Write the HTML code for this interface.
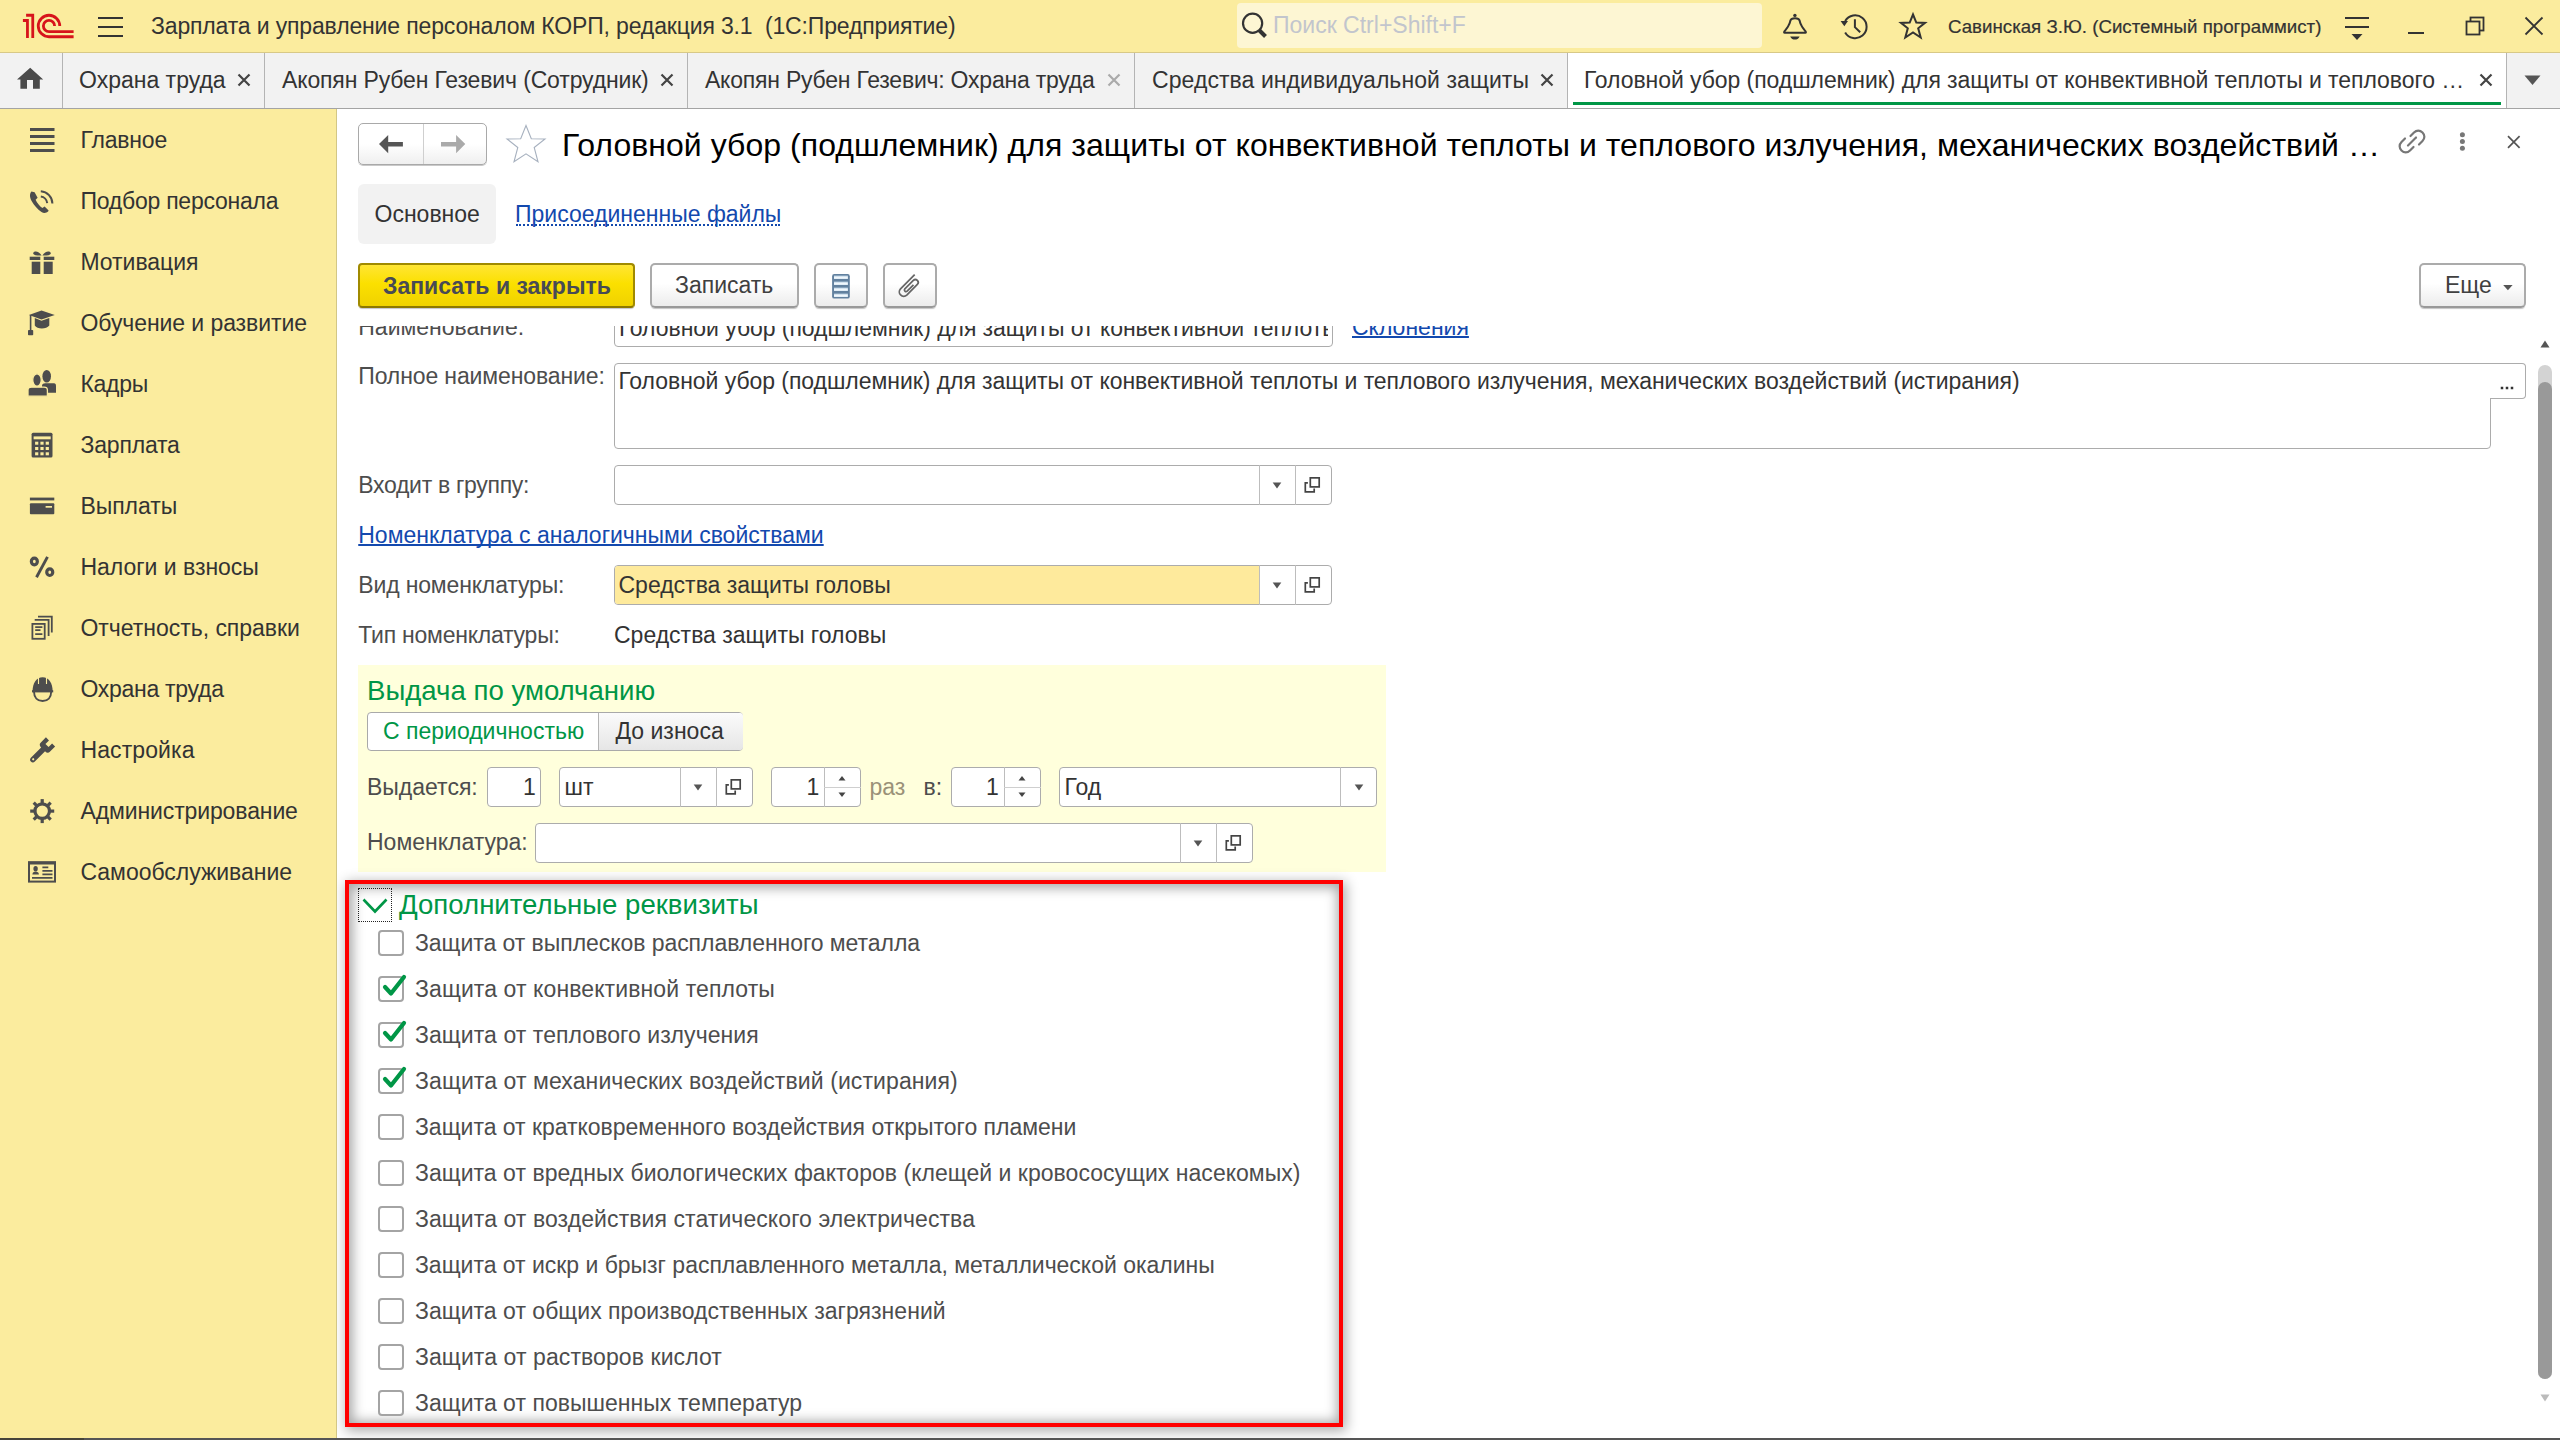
<!DOCTYPE html>
<html><head><meta charset="utf-8"><style>
html,body{margin:0;padding:0;width:2560px;height:1440px;overflow:hidden;background:#fff;font-family:"Liberation Sans",sans-serif;}
.a{position:absolute;}
.t{position:absolute;white-space:pre;font-family:"Liberation Sans",sans-serif;}
svg{position:absolute;overflow:visible}
</style></head><body>
<div class="a" style="left:0px;top:0px;width:2560px;height:52px;background:#fbec9e"></div>
<div class="a" style="left:0px;top:52px;width:2560px;height:1px;background:#d8c987"></div>
<div class="a" style="left:0px;top:53px;width:2560px;height:55px;background:#f2f2f2"></div>
<div class="a" style="left:0px;top:108px;width:2560px;height:1px;background:#a4a4a4"></div>
<div class="a" style="left:0px;top:109px;width:336px;height:1329px;background:#fbec9e"></div>
<div class="a" style="left:336px;top:109px;width:1px;height:1329px;background:#d3c785"></div>
<div class="a" style="left:337px;top:109px;width:2223px;height:1329px;background:#ffffff"></div>
<div class="a" style="left:0px;top:1438px;width:2560px;height:2px;background:#555555"></div>
<div class="a" style="left:0px;top:1438px;width:84px;height:2px;background:#46443a"></div>
<svg class="a" style="left:0px;top:0px" width="80" height="50" viewBox="0 0 80 50">
<g fill="none" stroke="#d7141b" stroke-width="2.8" stroke-linecap="butt" stroke-linejoin="miter">
<path d="M22.9 20.5 H27.45 V38"/>
<path d="M26.1 15.25 H32.75 V38"/>
<path d="M59.75 26 A10.75 10.75 0 1 0 49 36.75 H73.6"/>
<path d="M54.6 26 A5.6 5.6 0 1 0 49 31.6 H73.6"/>
</g>
</svg>
<div class="a" style="left:98px;top:17px;width:25px;height:2px;background:#333333"></div>
<div class="a" style="left:98px;top:26px;width:25px;height:2px;background:#333333"></div>
<div class="a" style="left:98px;top:35px;width:25px;height:2px;background:#333333"></div>
<div class="t" style="left:151px;top:11px;font-size:23px;line-height:30px;color:#333333;letter-spacing:-0.15px">Зарплата и управление персоналом КОРП, редакция 3.1&nbsp; (1С:Предприятие)</div>
<div class="a" style="left:1237px;top:3px;width:525px;height:45px;background:#fdf6d3;border-radius:4px"></div>
<svg class="a" style="left:1240px;top:10px" width="32" height="32" viewBox="0 0 32 32"><circle cx="12.6" cy="13.3" r="9.6" fill="none" stroke="#333" stroke-width="2.2"/><path d="M19 20 L25.5 26.5" stroke="#333" stroke-width="4" stroke-linecap="butt"/></svg>
<div class="t" style="left:1273px;top:10px;font-size:23px;line-height:30px;color:#c2c5cd;">Поиск Ctrl+Shift+F</div>
<svg class="a" style="left:1780px;top:10px" width="32" height="34" viewBox="0 0 32 34"><path d="M4.6 22.8 L25.4 22.8 C25.9 22.8 26.1 22.2 25.7 21.6 C24.6 19.8 22.6 17.8 21.5 15.6 C20 13 19.9 11.6 19.6 10.5 C19.2 9 17.8 8.2 15 8.2 C12.2 8.2 10.8 9 10.4 10.5 C10.1 11.6 10 13 8.5 15.6 C7.4 17.8 5.4 19.8 4.3 21.6 C3.9 22.2 4.1 22.8 4.6 22.8 Z" fill="none" stroke="#333" stroke-width="2" stroke-linejoin="round"/>
<circle cx="14.9" cy="5.4" r="1.7" fill="#333"/><path d="M10.2 26.4 L19.6 26.4 C18.5 28.7 16.8 29.6 14.9 29.6 C13 29.6 11.3 28.7 10.2 26.4 Z" fill="#333"/></svg>
<svg class="a" style="left:1838px;top:10px" width="34" height="34" viewBox="0 0 34 34"><path d="M7.14 11.0 A11.5 11.5 0 1 1 7.14 22.5" fill="none" stroke="#333" stroke-width="2"/>
<path d="M2.6 11.1 L10 11.1 L6.3 16.2 Z" fill="#333"/><path d="M16.9 9.3 L16.9 17.1 L22.2 22.2" fill="none" stroke="#333" stroke-width="2"/></svg>
<svg class="a" style="left:1896px;top:10px" width="34" height="34" viewBox="0 0 34 34"><path d="M17 4.5 L20.3 12.6 L29 12.9 L22.2 18.3 L24.7 27.5 L17 22.5 L9.3 27.5 L11.8 18.3 L5 12.9 L13.7 12.6 Z" fill="none" stroke="#333" stroke-width="2" stroke-linejoin="miter"/></svg>
<div class="t" style="left:1948px;top:12px;font-size:18.7px;line-height:30px;color:#333333;-webkit-text-stroke:0.2px #333">Савинская З.Ю. (Системный программист)</div>
<div class="a" style="left:2345px;top:17px;width:24px;height:2px;background:#333333"></div>
<div class="a" style="left:2345px;top:26px;width:24px;height:2px;background:#333333"></div>
<svg class="a" style="left:2350px;top:33px" width="14" height="8" viewBox="0 0 14 8"><path d="M1.5 1 L12.5 1 L7 7 Z" fill="#333"/></svg>
<div class="a" style="left:2408px;top:32px;width:16px;height:2px;background:#333333"></div>
<svg class="a" style="left:2464px;top:15px" width="22" height="22" viewBox="0 0 22 22"><rect x="6.5" y="2.5" width="13" height="13" fill="none" stroke="#333" stroke-width="1.8"/><rect x="2.5" y="6.5" width="13" height="13" fill="#fbec9e" stroke="#333" stroke-width="1.8"/></svg>
<svg class="a" style="left:2523px;top:15px" width="22" height="22" viewBox="0 0 22 22"><path d="M2.5 2.5 L19.5 19.5 M19.5 2.5 L2.5 19.5" stroke="#333" stroke-width="1.8"/></svg>
<svg class="a" style="left:15px;top:66px" width="30" height="26" viewBox="0 0 30 26"><path d="M15.2 1.8 L28.2 13.6 L24.8 13.6 L24.8 22.7 L18 22.7 L18 14 L12 14 L12 22.7 L5.4 22.7 L5.4 13.6 L2 13.6 Z" fill="#4b4b4b"/></svg>
<div class="a" style="left:62px;top:53px;width:1px;height:55px;background:#b4b4b4"></div>
<div class="a" style="left:264px;top:53px;width:1px;height:55px;background:#b4b4b4"></div>
<div class="a" style="left:687px;top:53px;width:1px;height:55px;background:#b4b4b4"></div>
<div class="a" style="left:1134px;top:53px;width:1px;height:55px;background:#b4b4b4"></div>
<div class="a" style="left:1567px;top:53px;width:1px;height:55px;background:#b4b4b4"></div>
<div class="a" style="left:2506px;top:53px;width:1px;height:55px;background:#b4b4b4"></div>
<div class="a" style="left:1568px;top:53px;width:938px;height:55px;background:#ffffff"></div>
<div class="a" style="left:1573px;top:102px;width:928px;height:3px;background:#009646"></div>
<div class="t" style="left:79px;top:65px;font-size:23px;line-height:30px;color:#333333;">Охрана труда</div>
<svg class="a" style="left:236.5px;top:73px" width="14" height="14" viewBox="0 0 14 14"><path d="M1.5 1.5 L12.5 12.5 M12.5 1.5 L1.5 12.5" stroke="#444" stroke-width="2.2"/></svg>
<div class="t" style="left:282px;top:65px;font-size:23px;line-height:30px;color:#333333;letter-spacing:-0.14px">Акопян Рубен Гезевич (Сотрудник)</div>
<svg class="a" style="left:660px;top:73px" width="14" height="14" viewBox="0 0 14 14"><path d="M1.5 1.5 L12.5 12.5 M12.5 1.5 L1.5 12.5" stroke="#444" stroke-width="2.2"/></svg>
<div class="t" style="left:705px;top:65px;font-size:23px;line-height:30px;color:#333333;letter-spacing:-0.22px">Акопян Рубен Гезевич: Охрана труда</div>
<svg class="a" style="left:1106.5px;top:73px" width="14" height="14" viewBox="0 0 14 14"><path d="M1.5 1.5 L12.5 12.5 M12.5 1.5 L1.5 12.5" stroke="#aaa" stroke-width="2.2"/></svg>
<div class="t" style="left:1152px;top:65px;font-size:23px;line-height:30px;color:#333333;letter-spacing:0.07px">Средства индивидуальной защиты</div>
<svg class="a" style="left:1539.5px;top:73px" width="14" height="14" viewBox="0 0 14 14"><path d="M1.5 1.5 L12.5 12.5 M12.5 1.5 L1.5 12.5" stroke="#444" stroke-width="2.2"/></svg>
<div class="t" style="left:1584px;top:65px;font-size:23px;line-height:30px;color:#333333;letter-spacing:-0.066px">Головной убор (подшлемник) для защиты от конвективной теплоты и теплового …</div>
<svg class="a" style="left:2478.5px;top:73px" width="14" height="14" viewBox="0 0 14 14"><path d="M1.5 1.5 L12.5 12.5 M12.5 1.5 L1.5 12.5" stroke="#444" stroke-width="2.2"/></svg>
<svg class="a" style="left:2524px;top:75px" width="18" height="11" viewBox="0 0 18 11"><path d="M0.5 0.5 L16.5 0.5 L8.5 10 Z" fill="#555"/></svg>
<div class="t" style="left:80.5px;top:124.5px;font-size:23px;line-height:30px;color:#333333;letter-spacing:-0.2px">Главное</div>
<div class="t" style="left:80.5px;top:185.5px;font-size:23px;line-height:30px;color:#333333;letter-spacing:-0.25px">Подбор персонала</div>
<div class="t" style="left:80.5px;top:246.5px;font-size:23px;line-height:30px;color:#333333;letter-spacing:-0.05px">Мотивация</div>
<div class="t" style="left:80.5px;top:307.5px;font-size:23px;line-height:30px;color:#333333;letter-spacing:-0.08px">Обучение и развитие</div>
<div class="t" style="left:80.5px;top:368.5px;font-size:23px;line-height:30px;color:#333333;letter-spacing:-0.3px">Кадры</div>
<div class="t" style="left:80.5px;top:429.5px;font-size:23px;line-height:30px;color:#333333;letter-spacing:-0.19px">Зарплата</div>
<div class="t" style="left:80.5px;top:490.5px;font-size:23px;line-height:30px;color:#333333;letter-spacing:-0.07px">Выплаты</div>
<div class="t" style="left:80.5px;top:551.5px;font-size:23px;line-height:30px;color:#333333;letter-spacing:-0.03px">Налоги и взносы</div>
<div class="t" style="left:80.5px;top:612.5px;font-size:23px;line-height:30px;color:#333333;letter-spacing:-0.03px">Отчетность, справки</div>
<div class="t" style="left:80.5px;top:673.5px;font-size:23px;line-height:30px;color:#333333;letter-spacing:-0.29px">Охрана труда</div>
<div class="t" style="left:80.5px;top:734.5px;font-size:23px;line-height:30px;color:#333333;letter-spacing:0.1px">Настройка</div>
<div class="t" style="left:80.5px;top:795.5px;font-size:23px;line-height:30px;color:#333333;letter-spacing:-0.12px">Администрирование</div>
<div class="t" style="left:80.5px;top:856.5px;font-size:23px;line-height:30px;color:#333333;letter-spacing:-0.03px">Самообслуживание</div>
<svg class="a" style="left:26px;top:125px" width="32" height="30" viewBox="0 0 32 30"><rect x="4" y="3" width="24.5" height="3" fill="#4d4d4d"/><rect x="4" y="10" width="24.5" height="3" fill="#4d4d4d"/><rect x="4" y="17" width="24.5" height="3" fill="#4d4d4d"/><rect x="4" y="24" width="24.5" height="3" fill="#4d4d4d"/></svg>
<svg class="a" style="left:26px;top:186px" width="32" height="30" viewBox="0 0 32 30"><path d="M5.5 5.5 C3.6 7.5 3.4 11 5.6 15 C8 19.5 12 23.8 15.5 26 C18 27.6 20.5 27 22.3 25.2 L22.6 24.6 L18.6 20.6 L16.4 22 C13.8 20.4 10.8 16.6 9.6 13.8 L11.6 11.8 L8.6 6.2 Z" fill="#4d4d4d"/>
<path d="M14.8 10.6 A7.4 7.4 0 0 1 21.2 17.2" fill="none" stroke="#4d4d4d" stroke-width="2"/><path d="M14.8 5.2 A12.6 12.6 0 0 1 26.4 17.6" fill="none" stroke="#4d4d4d" stroke-width="2"/></svg>
<svg class="a" style="left:26px;top:247px" width="32" height="30" viewBox="0 0 32 30"><rect x="3.7" y="9.7" width="10.6" height="3.3" fill="#4d4d4d"/><rect x="17.7" y="9.7" width="10.6" height="3.3" fill="#4d4d4d"/><rect x="5.7" y="14.7" width="8.6" height="12.3" fill="#4d4d4d"/><rect x="17.7" y="14.7" width="9" height="12.3" fill="#4d4d4d"/>
<path d="M15.6 8.6 C13 4 8.5 3.5 7.3 5.8 C6.6 7.4 8.6 8.8 15.6 8.6 Z M16.4 8.6 C19 4 23.5 3.5 24.7 5.8 C25.4 7.4 23.4 8.8 16.4 8.6 Z" fill="#4d4d4d"/></svg>
<svg class="a" style="left:26px;top:308px" width="32" height="30" viewBox="0 0 32 30"><path d="M2.9 7 L15.5 2.6 L28.8 7 L15.5 11.5 Z" fill="#4d4d4d"/><path d="M8.8 10 L8.8 17.5 C11 21.5 20.5 21.5 23.3 17.5 L23.3 10 L15.5 12.8 Z" fill="#4d4d4d"/>
<path d="M4.6 7 L4.6 23" stroke="#4d4d4d" stroke-width="1.6"/><rect x="2" y="22" width="5.2" height="5.2" rx="0.8" fill="#4d4d4d"/></svg>
<svg class="a" style="left:26px;top:369px" width="32" height="30" viewBox="0 0 32 30"><ellipse cx="20.7" cy="7.25" rx="4.3" ry="6.3" fill="#4d4d4d"/><path d="M16 23.7 L16 17 C16 15 17 14.2 19.5 14.2 L28 14.2 C29.3 14.2 30 15 30 17 L30 23.7 Z" fill="#4d4d4d"/>
<ellipse cx="11" cy="11" rx="4.25" ry="6.2" fill="#4d4d4d" stroke="#fbec9e" stroke-width="1.3"/><path d="M2 27.2 L2 21 C2 19 3.2 18.2 5.5 18.2 L18 18.2 C20.3 18.2 21.4 19 21.4 21 L21.4 27.2 Z" fill="#4d4d4d" stroke="#fbec9e" stroke-width="1.3"/></svg>
<svg class="a" style="left:26px;top:430px" width="32" height="30" viewBox="0 0 32 30"><rect x="5.6" y="2.8" width="20.9" height="24.8" rx="1.5" fill="#4d4d4d"/><rect x="7.6" y="6.4" width="17.1" height="2.9" fill="#fbec9e"/><rect x="9.1" y="11.7" width="3.2" height="3" fill="#fbec9e"/><rect x="14.399999999999999" y="11.7" width="3.2" height="3" fill="#fbec9e"/><rect x="19.7" y="11.7" width="3.2" height="3" fill="#fbec9e"/><rect x="9.1" y="17.0" width="3.2" height="3" fill="#fbec9e"/><rect x="14.399999999999999" y="17.0" width="3.2" height="3" fill="#fbec9e"/><rect x="19.7" y="17.0" width="3.2" height="3" fill="#fbec9e"/><rect x="9.1" y="22.299999999999997" width="3.2" height="3" fill="#fbec9e"/><rect x="14.399999999999999" y="22.299999999999997" width="3.2" height="3" fill="#fbec9e"/><rect x="19.7" y="22.299999999999997" width="3.2" height="3" fill="#fbec9e"/></svg>
<svg class="a" style="left:26px;top:491px" width="32" height="30" viewBox="0 0 32 30"><rect x="3.9" y="6.6" width="24.4" height="2.8" fill="#4d4d4d"/><rect x="3.9" y="12.2" width="24.4" height="11.1" rx="1" fill="#4d4d4d"/><rect x="19.6" y="15" width="6.4" height="1.7" fill="#fbec9e"/></svg>
<svg class="a" style="left:26px;top:552px" width="32" height="30" viewBox="0 0 32 30"><ellipse cx="8.35" cy="9.5" rx="3.0" ry="3.3" fill="none" stroke="#4d4d4d" stroke-width="3.2"/><ellipse cx="23.75" cy="20.2" rx="3.0" ry="3.3" fill="none" stroke="#4d4d4d" stroke-width="3.2"/>
<path d="M10.5 25.2 L21.5 4.9" stroke="#4d4d4d" stroke-width="2.9"/></svg>
<svg class="a" style="left:26px;top:613px" width="32" height="30" viewBox="0 0 32 30"><path d="M12 3.6 L25.8 3.6 L25.8 19.5" fill="none" stroke="#4d4d4d" stroke-width="1.8"/><path d="M8.7 6.8 L22.6 6.8 L22.6 23" fill="none" stroke="#4d4d4d" stroke-width="1.8"/>
<rect x="6.4" y="10.9" width="12.3" height="14.9" fill="none" stroke="#4d4d4d" stroke-width="1.8"/><path d="M9.2 14.2 L16.4 14.2 M9.2 17.2 L14.5 17.2 M9.2 21.2 L16.4 21.2" stroke="#4d4d4d" stroke-width="1.7"/></svg>
<svg class="a" style="left:26px;top:674px" width="32" height="30" viewBox="0 0 32 30"><path d="M6.5 18 C6.5 9 10.5 3.3 16.6 3.3 C22.7 3.3 26.7 9 26.7 18 Z" fill="#4d4d4d"/>
<path d="M12.5 3.8 L12.5 10 M20.5 3.8 L20.5 10" stroke="#fbec9e" stroke-width="1.1"/>
<path d="M8 17.5 C8 23.5 11.5 27 16.6 27 C21.7 27 25.2 23.5 25.2 17.5" fill="none" stroke="#4d4d4d" stroke-width="1.9"/><rect x="6" y="16.2" width="21.2" height="2.2" fill="#4d4d4d"/></svg>
<svg class="a" style="left:26px;top:735px" width="32" height="30" viewBox="0 0 32 30"><g transform="translate(21 10.5) rotate(45)"><path d="M-6.5 -5 L-2.2 -5 L-2.2 0 L2.2 0 L2.2 -5 L6.5 -5 L6.5 2.5 C6.5 4.5 5 5.5 3 5.5 L2.8 5.5 L2.8 20 C2.8 21.6 1.6 22.8 0 22.8 C-1.6 22.8 -2.8 21.6 -2.8 20 L-2.8 5.5 L-3 5.5 C-5 5.5 -6.5 4.5 -6.5 2.5 Z" fill="#4d4d4d"/><circle cx="0" cy="19.5" r="1.1" fill="#fbec9e"/></g></svg>
<svg class="a" style="left:26px;top:796px" width="32" height="30" viewBox="0 0 32 30"><rect x="14.6" y="3.1" width="3.2" height="6" fill="#4d4d4d" transform="rotate(0 16.2 15.1)"/><rect x="14.6" y="3.1" width="3.2" height="6" fill="#4d4d4d" transform="rotate(45 16.2 15.1)"/><rect x="14.6" y="3.1" width="3.2" height="6" fill="#4d4d4d" transform="rotate(90 16.2 15.1)"/><rect x="14.6" y="3.1" width="3.2" height="6" fill="#4d4d4d" transform="rotate(135 16.2 15.1)"/><rect x="14.6" y="3.1" width="3.2" height="6" fill="#4d4d4d" transform="rotate(180 16.2 15.1)"/><rect x="14.6" y="3.1" width="3.2" height="6" fill="#4d4d4d" transform="rotate(225 16.2 15.1)"/><rect x="14.6" y="3.1" width="3.2" height="6" fill="#4d4d4d" transform="rotate(270 16.2 15.1)"/><rect x="14.6" y="3.1" width="3.2" height="6" fill="#4d4d4d" transform="rotate(315 16.2 15.1)"/><circle cx="16.2" cy="15.1" r="7.3" fill="none" stroke="#4d4d4d" stroke-width="3.2"/></svg>
<svg class="a" style="left:26px;top:857px" width="32" height="30" viewBox="0 0 32 30"><rect x="3" y="5.4" width="26" height="19.2" fill="none" stroke="#4d4d4d" stroke-width="2"/><rect x="2" y="4.4" width="28" height="3.1" fill="#4d4d4d"/>
<ellipse cx="9.6" cy="11.8" rx="2.2" ry="2.8" fill="#4d4d4d"/><path d="M6.4 17.6 C6.4 15.5 7.6 14.8 9.6 14.8 C11.6 14.8 12.9 15.5 12.9 17.6 Z" fill="#4d4d4d"/>
<path d="M16.4 10.3 L22.3 10.3 M16.4 13.8 L26.5 13.8 M16.4 17.4 L26.5 17.4 M6 20.9 L26.5 20.9" stroke="#4d4d4d" stroke-width="1.8"/></svg>
<div class="a" style="left:358px;top:123px;width:129px;height:42px;box-sizing:border-box;border:1px solid #a9a9a9;border-radius:5px;background:linear-gradient(#ffffff 50%,#efefef);box-shadow:0 1px 0 #c9c9c9"></div>
<div class="a" style="left:423px;top:124px;width:1px;height:40px;background:#cfcfcf"></div>
<svg class="a" style="left:378px;top:134px" width="26" height="20" viewBox="0 0 26 20"><path d="M1 10.1 L10.2 1 L10.2 7.9 L24.9 7.9 L24.9 12.6 L10.2 12.6 L10.2 19.2 Z" fill="#555"/></svg>
<svg class="a" style="left:440px;top:134px" width="26" height="20" viewBox="0 0 26 20"><path d="M25.3 10.1 L16.1 1 L16.1 7.9 L1 7.9 L1 12.6 L16.1 12.6 L16.1 19.2 Z" fill="#aaa"/></svg>
<svg class="a" style="left:504px;top:124px" width="44" height="42" viewBox="0 0 44 42"><path d="M22 1.5 L27.3 14.7 L41 15 L30.2 23.5 L34 37.8 L22 29.8 L10 37.8 L13.8 23.5 L3 15 L16.7 14.7 Z" fill="none" stroke="#a7b1bf" stroke-width="1.1"/></svg>
<div class="t" style="left:562px;top:125px;font-size:32px;line-height:40px;color:#000;letter-spacing:0.04px">Головной убор (подшлемник) для защиты от конвективной теплоты и теплового излучения, механических воздействий …</div>
<svg class="a" style="left:2397.4px;top:126.2px" width="32" height="30" viewBox="0 0 32 30"><g fill="none" stroke="#777" stroke-width="2.2" stroke-linecap="round"><path d="M13.5 10 L17 6.5 C19.5 4 23 4 25.5 6.5 C28 9 28 12.5 25.5 15 L22 18.5"/><path d="M16.5 21 L13 24.5 C10.5 27 7 27 4.5 24.5 C2 22 2 18.5 4.5 16 L8 12.5"/><path d="M11 19.5 L19 11.5"/></g></svg>
<svg class="a" style="left:2455px;top:130px" width="14" height="24" viewBox="0 0 14 24"><circle cx="7.4" cy="4.8" r="2.5" fill="#777"/><circle cx="7.4" cy="11.6" r="2.5" fill="#777"/><circle cx="7.4" cy="18.3" r="2.5" fill="#777"/></svg>
<svg class="a" style="left:2505px;top:133px" width="18" height="18" viewBox="0 0 18 18"><path d="M3 3.2 L14.6 14.8 M14.6 3.2 L3 14.8" stroke="#555" stroke-width="1.7"/></svg>
<div class="a" style="left:358px;top:184px;width:138px;height:60px;background:#f2f2f2;border-radius:6px"></div>
<div class="t" style="left:374.5px;top:198.5px;font-size:23px;line-height:30px;color:#333333;">Основное</div>
<div class="t" style="left:515px;top:198.5px;font-size:23px;line-height:30px;color:#1349ae;">Присоединенные файлы</div>
<div class="a" style="left:516px;top:224px;width:264px;height:2px;border-bottom:2px dotted #1349ae;box-sizing:border-box;height:2px"></div>
<div class="a" style="left:358px;top:263px;width:277px;height:45px;box-sizing:border-box;border:2px solid #a08a00;border-bottom-color:#8c7800;border-radius:4px;background:linear-gradient(#ffe534,#fbe000 45%,#f0d200);box-shadow:0 2px 1px -1px #c4c4cc"></div>
<div class="t" style="left:383px;top:271px;font-size:23px;line-height:30px;color:#474a55;font-weight:bold">Записать и закрыть</div>
<div class="a" style="left:650px;top:263px;width:149px;height:45px;box-sizing:border-box;border:2px solid #ababab;border-bottom-color:#999;border-radius:5px;background:linear-gradient(#ffffff 45%,#ececec);box-shadow:0 2px 1px -1px #c4c4c4"></div>
<div class="t" style="left:675px;top:270px;font-size:23px;line-height:30px;color:#404040;">Записать</div>
<div class="a" style="left:814px;top:263px;width:54px;height:45px;box-sizing:border-box;border:2px solid #ababab;border-bottom-color:#999;border-radius:5px;background:linear-gradient(#ffffff 45%,#ececec);box-shadow:0 2px 1px -1px #c4c4c4"></div>
<div class="a" style="left:883px;top:263px;width:54px;height:45px;box-sizing:border-box;border:2px solid #ababab;border-bottom-color:#999;border-radius:5px;background:linear-gradient(#ffffff 45%,#ececec);box-shadow:0 2px 1px -1px #c4c4c4"></div>
<svg class="a" style="left:831px;top:273px" width="20" height="27" viewBox="0 0 20 27"><defs><linearGradient id="bg1" x1="0" y1="0" x2="0" y2="1"><stop offset="0" stop-color="#b9d0e3"/><stop offset="0.6" stop-color="#f4fafe"/><stop offset="1" stop-color="#d6e6f2"/></linearGradient></defs><rect x="1.1" y="1" width="17.7" height="24.6" rx="2.2" fill="#62819f"/><rect x="3" y="2.6" width="13.9" height="3.4" fill="url(#bg1)"/><rect x="3" y="8.6" width="13.9" height="3.4" fill="url(#bg1)"/><rect x="3" y="14.6" width="13.9" height="3.4" fill="url(#bg1)"/><rect x="3" y="20.6" width="13.9" height="3.4" fill="url(#bg1)"/></svg>
<svg class="a" style="left:897px;top:272px" width="26" height="28" viewBox="0 0 26 28"><path d="M17.67 2.7 L3.53 16.85 A4.4 4.4 0 0 0 9.75 23.07 L20.36 12.46 A2.85 2.85 0 0 0 16.33 8.43 L7.85 16.92 A1.6 1.6 0 0 0 10.11 19.18 L16.47 12.82" fill="none" stroke="#666" stroke-width="1.75" stroke-linejoin="round"/></svg>
<div class="a" style="left:2419px;top:263px;width:107px;height:45px;box-sizing:border-box;border:2px solid #ababab;border-bottom-color:#999;border-radius:5px;background:linear-gradient(#ffffff 45%,#ececec);box-shadow:0 2px 1px -1px #c4c4c4"></div>
<div class="t" style="left:2445px;top:270px;font-size:23px;line-height:30px;color:#404040;">Еще</div>
<svg class="a" style="left:2501px;top:282px" width="14" height="10" viewBox="0 0 14 10"><path d="M2.2 3 L11.6 3 L6.9 8.2 Z" fill="#555"/></svg>
<div class="a" style="left:337px;top:326px;width:2200px;height:1112px;overflow:hidden">
<div class="a" style="left:-337px;top:-326px;width:2560px;height:1440px">
<div class="t" style="left:358.25px;top:312px;font-size:23px;line-height:30px;color:#4d4d4d;">Наименование:</div>
<div class="a" style="left:614px;top:307px;width:719px;height:40px;box-sizing:border-box;border:1px solid #acacac;border-radius:4px;background:#fff"></div>
<div class="a" style="left:615px;top:308px;width:713px;height:38px;overflow:hidden"><div class="t" style="left:4px;top:5px;font-size:23px;line-height:30px;color:#333;letter-spacing:-0.05px">Головной убор (подшлемник) для защиты от конвективной теплоты и теплового излучения</div></div>
<div class="t" style="left:1352px;top:312px;font-size:23px;line-height:30px;color:#1349ae;text-decoration:underline;text-decoration-skip-ink:none;text-underline-offset:1px">Склонения</div>
<div class="t" style="left:358.25px;top:360.5px;font-size:23px;line-height:30px;color:#4d4d4d;letter-spacing:-0.12px">Полное наименование:</div>
<div class="a" style="left:614px;top:363px;width:1877px;height:86px;box-sizing:border-box;border:1px solid #acacac;border-radius:4px;background:#fff;border-radius:4px 0 4px 4px"></div>
<div class="t" style="left:618.5px;top:366px;font-size:23px;line-height:30px;color:#333;letter-spacing:-0.05px">Головной убор (подшлемник) для защиты от конвективной теплоты и теплового излучения, механических воздействий (истирания)</div>
<div class="a" style="left:2490px;top:363px;width:36px;height:36px;box-sizing:border-box;border:1px solid #acacac;border-radius:4px;background:#fff;border-left:none;border-radius:0 4px 4px 0"></div>
<svg class="a" style="left:2499px;top:385px" width="16" height="6" viewBox="0 0 16 6"><rect x="1.75" y="1.75" width="2.5" height="2.5" fill="#333"/><rect x="6.75" y="1.75" width="2.5" height="2.5" fill="#333"/><rect x="11.75" y="1.75" width="2.5" height="2.5" fill="#333"/></svg>
<div class="t" style="left:358.25px;top:470px;font-size:23px;line-height:30px;color:#4d4d4d;letter-spacing:-0.3px">Входит в группу:</div>
<div class="a" style="left:614px;top:465px;width:718px;height:40px;box-sizing:border-box;border:1px solid #acacac;border-radius:4px;background:#fff"></div>
<div class="a" style="left:1259px;top:465px;width:1px;height:40px;background:#bdbdbd"></div>
<svg class="a" style="left:1272.0px;top:481.5px" width="10" height="7" viewBox="0 0 10 7"><path d="M0.7 0.5 L9.3 0.5 L5 6.5 Z" fill="#555"/></svg>
<div class="a" style="left:1295px;top:465px;width:1px;height:40px;background:#bdbdbd"></div>
<svg class="a" style="left:1303.75px;top:476.0px" width="18" height="18" viewBox="0 0 18 18"><rect x="6.3" y="1.85" width="8.9" height="9.05" fill="none" stroke="#444" stroke-width="1.7"/><path d="M3.9 6.85 H1.3 V15.9 H10.2 V12.4" fill="none" stroke="#444" stroke-width="1.7"/></svg>
<div class="t" style="left:358.25px;top:520px;font-size:23px;line-height:30px;color:#1349ae;text-decoration:underline;text-decoration-skip-ink:none;text-underline-offset:1px">Номенклатура с аналогичными свойствами</div>
<div class="t" style="left:358.25px;top:569.5px;font-size:23px;line-height:30px;color:#4d4d4d;letter-spacing:-0.15px">Вид номенклатуры:</div>
<div class="a" style="left:614px;top:565px;width:718px;height:40px;box-sizing:border-box;border:1px solid #acacac;border-radius:4px;background:#fff"></div>
<div class="a" style="left:615px;top:566px;width:644px;height:38px;background:#feea9c;border-radius:3px 0 0 3px"></div>
<div class="a" style="left:1259px;top:565px;width:1px;height:40px;background:#bdbdbd"></div>
<svg class="a" style="left:1272.0px;top:581.5px" width="10" height="7" viewBox="0 0 10 7"><path d="M0.7 0.5 L9.3 0.5 L5 6.5 Z" fill="#555"/></svg>
<div class="a" style="left:1295px;top:565px;width:1px;height:40px;background:#bdbdbd"></div>
<svg class="a" style="left:1303.75px;top:576.0px" width="18" height="18" viewBox="0 0 18 18"><rect x="6.3" y="1.85" width="8.9" height="9.05" fill="none" stroke="#444" stroke-width="1.7"/><path d="M3.9 6.85 H1.3 V15.9 H10.2 V12.4" fill="none" stroke="#444" stroke-width="1.7"/></svg>
<div class="t" style="left:618.5px;top:569.5px;font-size:23px;line-height:30px;color:#333;">Средства защиты головы</div>
<div class="t" style="left:358.25px;top:620px;font-size:23px;line-height:30px;color:#4d4d4d;letter-spacing:-0.23px">Тип номенклатуры:</div>
<div class="t" style="left:614px;top:620px;font-size:23px;line-height:30px;color:#333;">Средства защиты головы</div>
<div class="a" style="left:358px;top:665px;width:1028px;height:207px;background:#ffffdc"></div>
<div class="t" style="left:367px;top:676px;font-size:27.6px;line-height:30px;color:#009646;">Выдача по умолчанию</div>
<div class="a" style="left:367px;top:712px;width:376px;height:39px;box-sizing:border-box;border:1px solid #a9a9a9;border-radius:4px;background:#fff;overflow:hidden"></div>
<div class="a" style="left:598px;top:713px;width:144px;height:37px;background:linear-gradient(#fbfbfb,#e6e6e6);border-left:1px solid #b4b4b4;border-radius:0 3px 3px 0"></div>
<div class="t" style="left:383px;top:716px;font-size:23px;line-height:30px;color:#009646;">С периодичностью</div>
<div class="t" style="left:615.5px;top:716px;font-size:23px;line-height:30px;color:#333333;">До износа</div>
<div class="t" style="left:367px;top:771.8px;font-size:23px;line-height:30px;color:#4d4d4d;">Выдается:</div>
<div class="a" style="left:487px;top:767px;width:54px;height:40px;box-sizing:border-box;border:1px solid #acacac;border-radius:4px;background:#fff"></div>
<div class="t" style="left:523px;top:771.8px;font-size:23px;line-height:30px;color:#333;">1</div>
<div class="a" style="left:559px;top:767px;width:194px;height:40px;box-sizing:border-box;border:1px solid #acacac;border-radius:4px;background:#fff"></div>
<div class="a" style="left:680px;top:767px;width:1px;height:40px;background:#bdbdbd"></div>
<svg class="a" style="left:693.0px;top:783.5px" width="10" height="7" viewBox="0 0 10 7"><path d="M0.7 0.5 L9.3 0.5 L5 6.5 Z" fill="#555"/></svg>
<div class="a" style="left:716px;top:767px;width:1px;height:40px;background:#bdbdbd"></div>
<svg class="a" style="left:724.75px;top:778.0px" width="18" height="18" viewBox="0 0 18 18"><rect x="6.3" y="1.85" width="8.9" height="9.05" fill="none" stroke="#444" stroke-width="1.7"/><path d="M3.9 6.85 H1.3 V15.9 H10.2 V12.4" fill="none" stroke="#444" stroke-width="1.7"/></svg>
<div class="t" style="left:564.5px;top:771.8px;font-size:23px;line-height:30px;color:#333;">шт</div>
<div class="a" style="left:771px;top:767px;width:90px;height:40px;box-sizing:border-box;border:1px solid #acacac;border-radius:4px;background:#fff"></div>
<div class="a" style="left:824px;top:767px;width:1px;height:40px;background:#bdbdbd"></div>
<div class="a" style="left:824px;top:786.5px;width:37px;height:1.0px;background:#cfcfcf"></div>
<svg class="a" style="left:837px;top:775px" width="10" height="7" viewBox="0 0 10 7"><path d="M5 1 L8.5 5.5 L1.5 5.5 Z" fill="#444"/></svg>
<svg class="a" style="left:837px;top:791px" width="10" height="7" viewBox="0 0 10 7"><path d="M5 6 L8.5 1.5 L1.5 1.5 Z" fill="#444"/></svg>
<div class="t" style="left:806.5px;top:771.8px;font-size:23px;line-height:30px;color:#333;">1</div>
<div class="t" style="left:869.5px;top:771.8px;font-size:23px;line-height:30px;color:#9a9178;">раз</div>
<div class="t" style="left:923.5px;top:771.8px;font-size:23px;line-height:30px;color:#4d4d4d;">в:</div>
<div class="a" style="left:951px;top:767px;width:90px;height:40px;box-sizing:border-box;border:1px solid #acacac;border-radius:4px;background:#fff"></div>
<div class="a" style="left:1004px;top:767px;width:1px;height:40px;background:#bdbdbd"></div>
<div class="a" style="left:1004px;top:786.5px;width:37px;height:1.0px;background:#cfcfcf"></div>
<svg class="a" style="left:1017px;top:775px" width="10" height="7" viewBox="0 0 10 7"><path d="M5 1 L8.5 5.5 L1.5 5.5 Z" fill="#444"/></svg>
<svg class="a" style="left:1017px;top:791px" width="10" height="7" viewBox="0 0 10 7"><path d="M5 6 L8.5 1.5 L1.5 1.5 Z" fill="#444"/></svg>
<div class="t" style="left:986px;top:771.8px;font-size:23px;line-height:30px;color:#333;">1</div>
<div class="a" style="left:1059px;top:767px;width:318px;height:40px;box-sizing:border-box;border:1px solid #acacac;border-radius:4px;background:#fff"></div>
<div class="a" style="left:1340px;top:767px;width:1px;height:40px;background:#bdbdbd"></div>
<svg class="a" style="left:1353.5px;top:783.5px" width="10" height="7" viewBox="0 0 10 7"><path d="M0.7 0.5 L9.3 0.5 L5 6.5 Z" fill="#555"/></svg>
<div class="t" style="left:1064.5px;top:771.8px;font-size:23px;line-height:30px;color:#333;">Год</div>
<div class="t" style="left:367px;top:827px;font-size:23px;line-height:30px;color:#4d4d4d;">Номенклатура:</div>
<div class="a" style="left:535px;top:823px;width:718px;height:40px;box-sizing:border-box;border:1px solid #acacac;border-radius:4px;background:#fff"></div>
<div class="a" style="left:1180px;top:823px;width:1px;height:40px;background:#bdbdbd"></div>
<svg class="a" style="left:1193.0px;top:839.5px" width="10" height="7" viewBox="0 0 10 7"><path d="M0.7 0.5 L9.3 0.5 L5 6.5 Z" fill="#555"/></svg>
<div class="a" style="left:1216px;top:823px;width:1px;height:40px;background:#bdbdbd"></div>
<svg class="a" style="left:1224.75px;top:834.0px" width="18" height="18" viewBox="0 0 18 18"><rect x="6.3" y="1.85" width="8.9" height="9.05" fill="none" stroke="#444" stroke-width="1.7"/><path d="M3.9 6.85 H1.3 V15.9 H10.2 V12.4" fill="none" stroke="#444" stroke-width="1.7"/></svg>
<div class="a" style="left:345px;top:880px;width:998px;height:547px;box-sizing:border-box;border:4px solid #ff0000;box-shadow:2px 3px 12px 1px rgba(0,0,0,0.33), inset 1px 1px 12px 3px rgba(0,0,0,0.34)"></div>
<div class="a" style="left:358px;top:888px;width:34px;height:34px;box-sizing:border-box;border:1px dotted #222"></div>
<svg class="a" style="left:360px;top:895px" width="30" height="20" viewBox="0 0 30 20"><path d="M3.5 4.5 L15 16.5 L26.5 4.5" fill="none" stroke="#009646" stroke-width="2.6"/></svg>
<div class="t" style="left:399px;top:890px;font-size:27.6px;line-height:30px;color:#009646;">Дополнительные реквизиты</div>
<div class="a" style="left:378px;top:930px;width:26px;height:26px;box-sizing:border-box;border:2px solid #a4a4a4;border-radius:4px;background:#fff"></div>
<div class="t" style="left:415px;top:927.8px;font-size:23px;line-height:30px;color:#4d4d4d;letter-spacing:-0.053px">Защита от выплесков расплавленного металла</div>
<div class="a" style="left:378px;top:976px;width:26px;height:26px;box-sizing:border-box;border:2px solid #a4a4a4;border-radius:4px;background:#fff"></div>
<svg class="a" style="left:378px;top:972px" width="30" height="26" viewBox="0 0 30 26"><path d="M7 15 L13 21.5 L26 5" fill="none" stroke="#009646" stroke-width="4.2" stroke-linecap="round" stroke-linejoin="round"/></svg>
<div class="t" style="left:415px;top:973.8px;font-size:23px;line-height:30px;color:#4d4d4d;letter-spacing:0.1px">Защита от конвективной теплоты</div>
<div class="a" style="left:378px;top:1022px;width:26px;height:26px;box-sizing:border-box;border:2px solid #a4a4a4;border-radius:4px;background:#fff"></div>
<svg class="a" style="left:378px;top:1018px" width="30" height="26" viewBox="0 0 30 26"><path d="M7 15 L13 21.5 L26 5" fill="none" stroke="#009646" stroke-width="4.2" stroke-linecap="round" stroke-linejoin="round"/></svg>
<div class="t" style="left:415px;top:1019.8px;font-size:23px;line-height:30px;color:#4d4d4d;letter-spacing:0.07px">Защита от теплового излучения</div>
<div class="a" style="left:378px;top:1068px;width:26px;height:26px;box-sizing:border-box;border:2px solid #a4a4a4;border-radius:4px;background:#fff"></div>
<svg class="a" style="left:378px;top:1064px" width="30" height="26" viewBox="0 0 30 26"><path d="M7 15 L13 21.5 L26 5" fill="none" stroke="#009646" stroke-width="4.2" stroke-linecap="round" stroke-linejoin="round"/></svg>
<div class="t" style="left:415px;top:1065.8px;font-size:23px;line-height:30px;color:#4d4d4d;letter-spacing:0.096px">Защита от механических воздействий (истирания)</div>
<div class="a" style="left:378px;top:1114px;width:26px;height:26px;box-sizing:border-box;border:2px solid #a4a4a4;border-radius:4px;background:#fff"></div>
<div class="t" style="left:415px;top:1111.8px;font-size:23px;line-height:30px;color:#4d4d4d;letter-spacing:-0.018px">Защита от кратковременного воздействия открытого пламени</div>
<div class="a" style="left:378px;top:1160px;width:26px;height:26px;box-sizing:border-box;border:2px solid #a4a4a4;border-radius:4px;background:#fff"></div>
<div class="t" style="left:415px;top:1157.8px;font-size:23px;line-height:30px;color:#4d4d4d;letter-spacing:0.027px">Защита от вредных биологических факторов (клещей и кровососущих насекомых)</div>
<div class="a" style="left:378px;top:1206px;width:26px;height:26px;box-sizing:border-box;border:2px solid #a4a4a4;border-radius:4px;background:#fff"></div>
<div class="t" style="left:415px;top:1203.8px;font-size:23px;line-height:30px;color:#4d4d4d;letter-spacing:0.083px">Защита от воздействия статического электричества</div>
<div class="a" style="left:378px;top:1252px;width:26px;height:26px;box-sizing:border-box;border:2px solid #a4a4a4;border-radius:4px;background:#fff"></div>
<div class="t" style="left:415px;top:1249.8px;font-size:23px;line-height:30px;color:#4d4d4d;letter-spacing:-0.018px">Защита от искр и брызг расплавленного металла, металлической окалины</div>
<div class="a" style="left:378px;top:1298px;width:26px;height:26px;box-sizing:border-box;border:2px solid #a4a4a4;border-radius:4px;background:#fff"></div>
<div class="t" style="left:415px;top:1295.8px;font-size:23px;line-height:30px;color:#4d4d4d;letter-spacing:0.023px">Защита от общих производственных загрязнений</div>
<div class="a" style="left:378px;top:1344px;width:26px;height:26px;box-sizing:border-box;border:2px solid #a4a4a4;border-radius:4px;background:#fff"></div>
<div class="t" style="left:415px;top:1341.8px;font-size:23px;line-height:30px;color:#4d4d4d;letter-spacing:0.09px">Защита от растворов кислот</div>
<div class="a" style="left:378px;top:1390px;width:26px;height:26px;box-sizing:border-box;border:2px solid #a4a4a4;border-radius:4px;background:#fff"></div>
<div class="t" style="left:415px;top:1387.8px;font-size:23px;line-height:30px;color:#4d4d4d;letter-spacing:0.03px">Защита от повышенных температур</div>
</div></div>
<div class="a" style="left:2538px;top:365px;width:14px;height:1014px;background:#d3d3d3;border-radius:7px"></div>
<div class="a" style="left:2538px;top:382px;width:14px;height:997px;background:#999999;border-radius:7px"></div>
<svg class="a" style="left:2539px;top:339px" width="12" height="10" viewBox="0 0 12 10"><path d="M6 1.5 L10.5 8.5 L1.5 8.5 Z" fill="#555"/></svg>
<svg class="a" style="left:2539px;top:1393px" width="12" height="10" viewBox="0 0 12 10"><path d="M6 8.5 L10.5 1.5 L1.5 1.5 Z" fill="#bbb"/></svg>
</body></html>
